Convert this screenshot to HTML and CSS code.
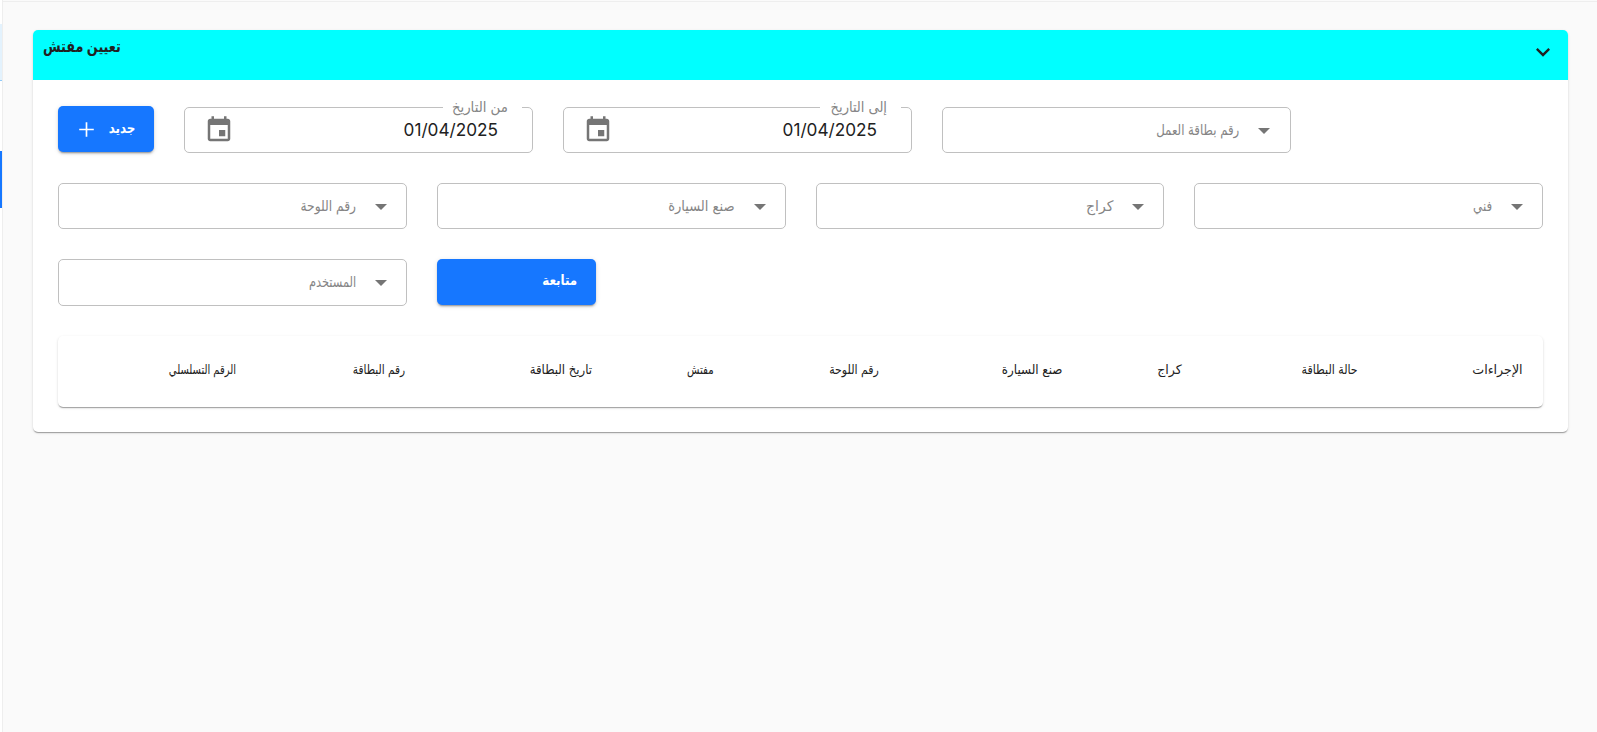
FILE: index.html
```html
<!DOCTYPE html>
<html lang="ar">
<head>
<meta charset="utf-8">
<title>تعيين مفتش</title>
<link rel="stylesheet" href="styles.css">
</head>
<body>
<div class="app">
  <aside class="rail"><div class="rail-hover"></div><div class="rail-active"></div></aside>
  <main class="main">
    <section class="card">
      <header class="card-head">
        <h1 class="title" dir="rtl">تعيين مفتش</h1>
        <svg class="chevron" viewBox="0 0 24 24"><path d="M7.41 8.59 12 13.17l4.59-4.58L18 10l-6 6-6-6z"/></svg>
      </header>
      <div class="card-body">
        <div class="row row-dates">
          <button class="btn btn-new">
            <svg class="plus" viewBox="0 0 24 24"><path d="M19 12.8h-6.2V19h-1.6v-6.2H5v-1.6h6.2V5h1.6v6.2H19z"/></svg>
            <span class="text sx-94" dir="rtl">جديد</span>
          </button>
          <fieldset class="field date">
            <legend class="legend legend-from"><span class="text sx-102" dir="rtl">من التاريخ</span></legend>
            <svg class="calendar" viewBox="0 0 24 24"><path d="M17 12h-5v5h5v-5zM16 1v2H8V1H6v2H5c-1.11 0-1.99.9-1.99 2L3 19c0 1.1.89 2 2 2h14c1.1 0 2-.9 2-2V5c0-1.1-.9-2-2-2h-1V1h-2zm3 18H5V8h14v11z"/></svg>
            <span class="value">01/04/2025</span>
          </fieldset>
          <fieldset class="field date">
            <legend class="legend legend-to"><span class="text" dir="rtl">إلى التاريخ</span></legend>
            <svg class="calendar" viewBox="0 0 24 24"><path d="M17 12h-5v5h5v-5zM16 1v2H8V1H6v2H5c-1.11 0-1.99.9-1.99 2L3 19c0 1.1.89 2 2 2h14c1.1 0 2-.9 2-2V5c0-1.1-.9-2-2-2h-1V1h-2zm3 18H5V8h14v11z"/></svg>
            <span class="value">01/04/2025</span>
          </fieldset>
          <div class="field select"><span class="text sx-90" dir="rtl">رقم بطاقة العمل</span><i class="caret"></i></div>
        </div>
        <div class="row">
          <div class="field select"><span class="text sx-94" dir="rtl">رقم اللوحة</span><i class="caret"></i></div>
          <div class="field select"><span class="text" dir="rtl">صنع السيارة</span><i class="caret"></i></div>
          <div class="field select"><span class="text sx-108" dir="rtl">كراج</span><i class="caret"></i></div>
          <div class="field select"><span class="text sx-90" dir="rtl">فني</span><i class="caret"></i></div>
        </div>
        <div class="row row-last">
          <div class="field select"><span class="text sx-87" dir="rtl">المستخدم</span><i class="caret"></i></div>
          <button class="btn btn-follow"><span class="text sx-94" dir="rtl">متابعة</span></button>
        </div>
        <div class="table">
          <div class="cell"><span class="text sx-85" dir="rtl">الرقم التسلسلي</span></div>
          <div class="cell"><span class="text sx-90" dir="rtl">رقم البطاقة</span></div>
          <div class="cell"><span class="text" dir="rtl">تاريخ البطاقة</span></div>
          <div class="cell"><span class="text sx-87" dir="rtl">مفتش</span></div>
          <div class="cell"><span class="text sx-94" dir="rtl">رقم اللوحة</span></div>
          <div class="cell"><span class="text sx-102" dir="rtl">صنع السيارة</span></div>
          <div class="cell"><span class="text sx-108" dir="rtl">كراج</span></div>
          <div class="cell"><span class="text sx-94" dir="rtl">حالة البطاقة</span></div>
          <div class="cell"><span class="text sx-108" dir="rtl">الإجراءات</span></div>
        </div>
      </div>
    </section>
  </main>
</div>
</body>
</html>
```
FILE: styles.css
```css
* { box-sizing: border-box; }
body {
  margin: 0;
  background: #fafafa;
  color: #212121;
  font-family: Inter, "DejaVu Sans Condensed", "DejaVu Sans", sans-serif;
}
.app { display: flex; height: 732px; overflow: hidden; }
.rail { width: 3px; flex: none; background: #fff; border-right: 1px solid #eee; padding-top: 24px; }
.rail-hover { height: 57px; background: #e3f2fd; border-bottom: 1px solid #90caf9; }
.rail-active { height: 57px; margin-top: 70px; background: #1677ff; }
.main { flex: 1; margin-top: 1px; border-top: 1px solid #eee; padding: 28px 29px 0 30px; }
.card {
  height: 402px;
  border-radius: 5px;
  background: #fff;
  box-shadow: 0 2px 1px -1px rgba(0,0,0,.2), 0 1px 1px rgba(0,0,0,.14), 0 1px 3px rgba(0,0,0,.12);
}
.card-head {
  display: flex;
  justify-content: space-between;
  height: 50px;
  padding: 6px 11px 0 10px;
  border-radius: 5px 5px 0 0;
  background: #0ff;
}
.title { margin: 0; font-size: 16px; line-height: 20px; font-weight: 700; transform: scaleX(.89); transform-origin: left; }
.chevron { width: 28px; height: 28px; margin-top: 2px; fill: #212121; }
.card-body { padding: 27px 25px 24px; }
.row { display: grid; grid-template-columns: repeat(4, 1fr); gap: 30px; margin-bottom: 30px; height: 46px; }
.row-dates { grid-template-columns: 96px repeat(3, 349px); }
.row-dates .select { padding: 0 20px 1px 0; }
.row-last { height: 47px; }
.row-last .select { padding-bottom: 1px; }
.field {
  position: relative;
  display: flex;
  align-items: center;
  height: 100%;
  min-width: 0;
  margin: 0;
  padding: 0;
  border: 1px solid #c0c0c0;
  border-radius: 5px;
}
.text { display: inline-block; white-space: nowrap; font-size: 14.5px; line-height: 20px; transform-origin: right; }

/* Horizontal condensing steps for Arabic labels */
.sx-85 { transform: scaleX(.85); }
.sx-87 { transform: scaleX(.87); }
.sx-90 { transform: scaleX(.9); }
.sx-94 { transform: scaleX(.94); }
.sx-102 { transform: scaleX(1.02); }
.sx-108 { transform: scaleX(1.08); }

.select { justify-content: flex-end; padding-right: 19px; color: #858585; }
.caret { margin: 2px 0 0 19px; border: 6px solid transparent; border-top-color: #757575; border-bottom: 0; }
.date { justify-content: space-between; padding: 0 34px 0 19px; }
.legend {
  position: absolute;
  top: -11px;
  right: 10px;
  display: flex;
  justify-content: flex-end;
  padding: 0 14px 0 0;
  background: #fff;
  color: #858585;
  line-height: 20px;
}
.legend-from { width: 79px; }
.legend-to { width: 81px; }
.calendar { width: 30px; height: 30px; fill: #757575; }
.value { font-size: 17.2px; line-height: 24px; }
.btn {
  display: flex;
  align-items: center;
  height: 46px;
  border: 0;
  border-radius: 5px;
  background: #1677ff;
  color: #fff;
  font-family: inherit;
  font-weight: 700;
  box-shadow: 0 3px 1px -2px rgba(0,0,0,.2), 0 2px 2px rgba(0,0,0,.14), 0 1px 5px rgba(0,0,0,.12);
}
.btn .text { font-size: 14px; }
.btn-new { justify-content: space-between; margin-top: -1px; padding: 0 19px 0 16px; }
.btn-new .text { margin-bottom: 3px; }
.plus { width: 25px; height: 25px; fill: #fff; }
.btn-follow { width: 159px; justify-content: flex-end; padding: 0 19px 5px; }
.table {
  display: grid;
  grid-template-columns: 198fr 169fr 187fr 122fr 165fr 183fr 120fr 176fr 165fr;
  align-items: center;
  height: 71px;
  padding-bottom: 5px;
  border-radius: 5px;
  box-shadow: 0 2px 1px -1px rgba(0,0,0,.2), 0 1px 1px rgba(0,0,0,.14), 0 1px 3px rgba(0,0,0,.12);
}
.cell { display: flex; justify-content: flex-end; padding-right: 20px; }
.cell .text { font-size: 13px; }
```
